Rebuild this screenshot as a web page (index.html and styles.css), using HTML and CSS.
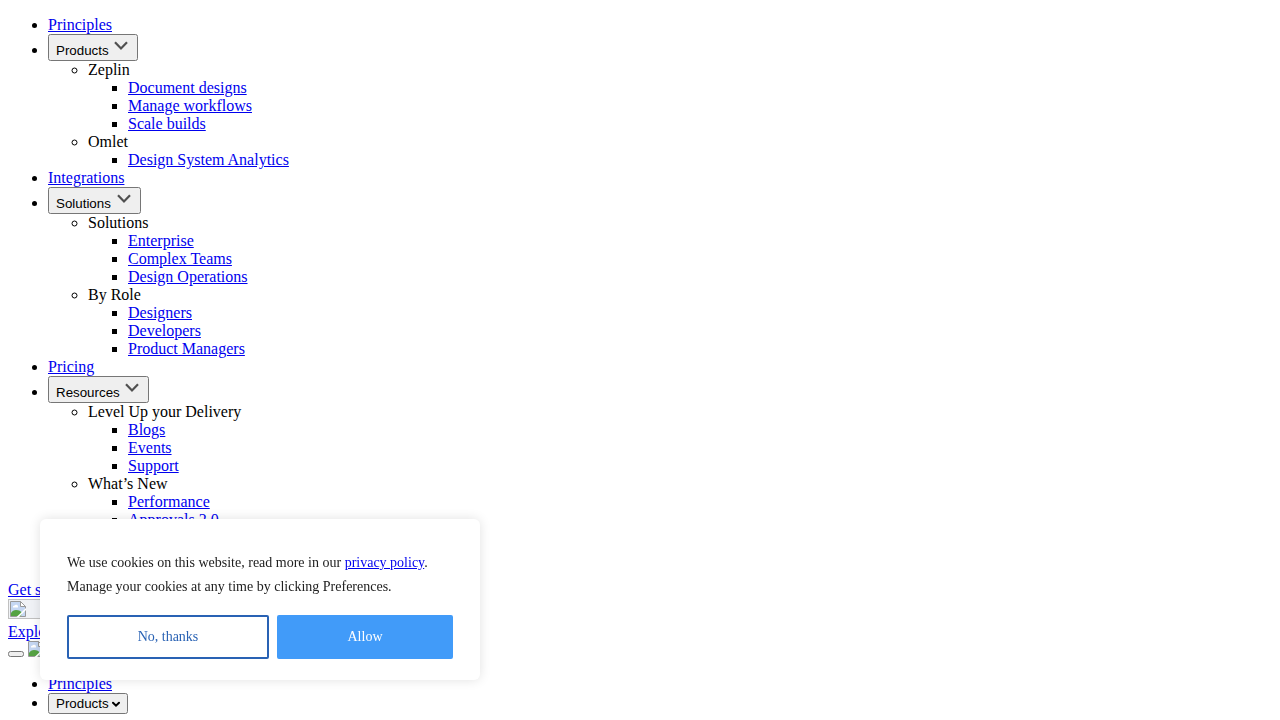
FILE: index.html
```
<!DOCTYPE html>
<html lang="en">
<head>
<meta charset="utf-8">
<title>Zeplin</title>
<link rel="stylesheet" href="styles.css">
</head>
<body>
<nav>
  <ul>
    <li><a href="#">Principles</a></li>
    <li><button type="button">Products <svg class="chevron"><use href="#chevron"/></svg></button>
      <ul>
        <li>Zeplin
          <ul>
            <li><a href="#">Document designs</a></li>
            <li><a href="#">Manage workflows</a></li>
            <li><a href="#">Scale builds</a></li>
          </ul>
        </li>
        <li>Omlet
          <ul>
            <li><a href="#">Design System Analytics</a></li>
          </ul>
        </li>
      </ul>
    </li>
    <li><a href="#">Integrations</a></li>
    <li><button type="button">Solutions <svg class="chevron"><use href="#chevron"/></svg></button>
      <ul>
        <li>Solutions
          <ul>
            <li><a href="#">Enterprise</a></li>
            <li><a href="#">Complex Teams</a></li>
            <li><a href="#">Design Operations</a></li>
          </ul>
        </li>
        <li>By Role
          <ul>
            <li><a href="#">Designers</a></li>
            <li><a href="#">Developers</a></li>
            <li><a href="#">Product Managers</a></li>
          </ul>
        </li>
      </ul>
    </li>
    <li><a href="#">Pricing</a></li>
    <li><button type="button">Resources <svg class="chevron"><use href="#chevron"/></svg></button>
      <ul>
        <li>Level Up your Delivery
          <ul>
            <li><a href="#">Blogs</a></li>
            <li><a href="#">Events</a></li>
            <li><a href="#">Support</a></li>
          </ul>
        </li>
        <li>What’s New
          <ul>
            <li><a href="#">Performance</a></li>
            <li><a href="#">Approvals 2.0</a></li>
            <li><a href="#">Flows</a></li>
            <li><a href="#">Updates</a></li>
          </ul>
        </li>
      </ul>
    </li>
  </ul>
</nav>
<div><a href="#">Get started</a></div>
<div class="logo-row"><span class="logo"><svg class="broken"><use href="#broken"/></svg></span></div>
<div><a href="#">Explore</a></div>
<div class="menu-row"><button type="button" class="menu-toggle" aria-label="Menu"></button><svg class="broken"><use href="#broken"/></svg></div>
<nav>
  <ul>
    <li><a href="#">Principles</a></li>
    <li><button type="button">Products <svg class="caret"><use href="#caret"/></svg></button></li>
  </ul>
</nav>
<section class="cookies" aria-label="Cookies">
  <p>We use cookies on this website, read more in our <a href="#">privacy policy</a>. Manage your cookies at any time by clicking Preferences.</p>
  <div class="actions">
    <button type="button" class="decline">No, thanks</button>
    <button type="button" class="allow">Allow</button>
  </div>
</section>
<svg class="defs" aria-hidden="true">
  <symbol id="chevron" viewBox="0 0 18 18"><path d="M3 5.300 9 11.500l6-6.200" fill="none" stroke="#505050" stroke-width="2.200"/></symbol>
  <symbol id="caret" viewBox="0 0 8 8"><path d="M1 2.700 4 5.700l3-3" fill="none" stroke="#000" stroke-width="2" stroke-linecap="round"/></symbol>
  <symbol id="broken" viewBox="0 0 16 16">
    <path d="M.5.5h10l5 5v10H.5z" fill="#c5d7f3" stroke="#999"/>
    <path d="M10.500.5v5h5z" fill="#fff" stroke="#999"/>
    <path d="M3 6.500a1.500 1.500 0 0 1 1.500-2 2 2 0 0 1 3.500 1v1z" fill="#fff"/>
    <path d="M1 15v-3c1-2 3-3 5-3 3 0 5 1 6 3l-1 3z" fill="#55a343"/>
    <path d="M16 7v2l-7 7H6.500z" fill="#fff"/>
  </symbol>
</svg>
</body>
</html>
```
FILE: styles.css
```
html {
  overflow: hidden;
}
body {
  margin: 0 8px;
  font-family: "Liberation Serif", serif;
  font-size: 16px;
  line-height: 18px;
  color: #000;
  background: #fff;
}
.defs {
  position: absolute;
  width: 0;
  height: 0;
}
nav > ul {
  margin: 16px 0;
}
a {
  color: #0000ee;
}
button {
  font-family: "Liberation Sans", sans-serif;
}
.chevron {
  width: 18px;
  height: 18px;
}
.caret {
  width: 8px;
  height: 8px;
}
.broken {
  width: 16px;
  height: 16px;
}
.logo-row {
  display: flex;
  padding-bottom: 4px;
}
.logo {
  display: flex;
  box-sizing: border-box;
  width: 88px;
  height: 20px;
  padding: 1px;
  border: 1px solid #c0c0c0;
  background: #f0f2f6;
}
.menu-row {
  display: flex;
  align-items: flex-end;
  gap: 4px;
  padding-bottom: 2px;
}
.menu-toggle {
  width: 16px;
}
.cookies {
  position: fixed;
  left: 40px;
  bottom: 40px;
  box-sizing: border-box;
  width: 440px;
  padding: 32px 27px 21px;
  border-radius: 6px;
  background: #fff;
  box-shadow: 0 0 12px rgba(0, 0, 0, 0.12);
  color: #212121;
}
.cookies p {
  margin: 0 0 16px;
  font-size: 14px;
  line-height: 24px;
}
.actions {
  display: grid;
  grid-template-columns: 202fr 176fr;
  gap: 8px;
}
.actions button {
  height: 44px;
  border: 2px solid #2962b4;
  border-radius: 2px;
  font-family: "Liberation Serif", serif;
  font-size: 14px;
}
.decline {
  background: #fff;
  color: #2962b4;
}
.actions .allow {
  border-color: #419bf9;
  background: #419bf9;
  color: #fff;
}
```
